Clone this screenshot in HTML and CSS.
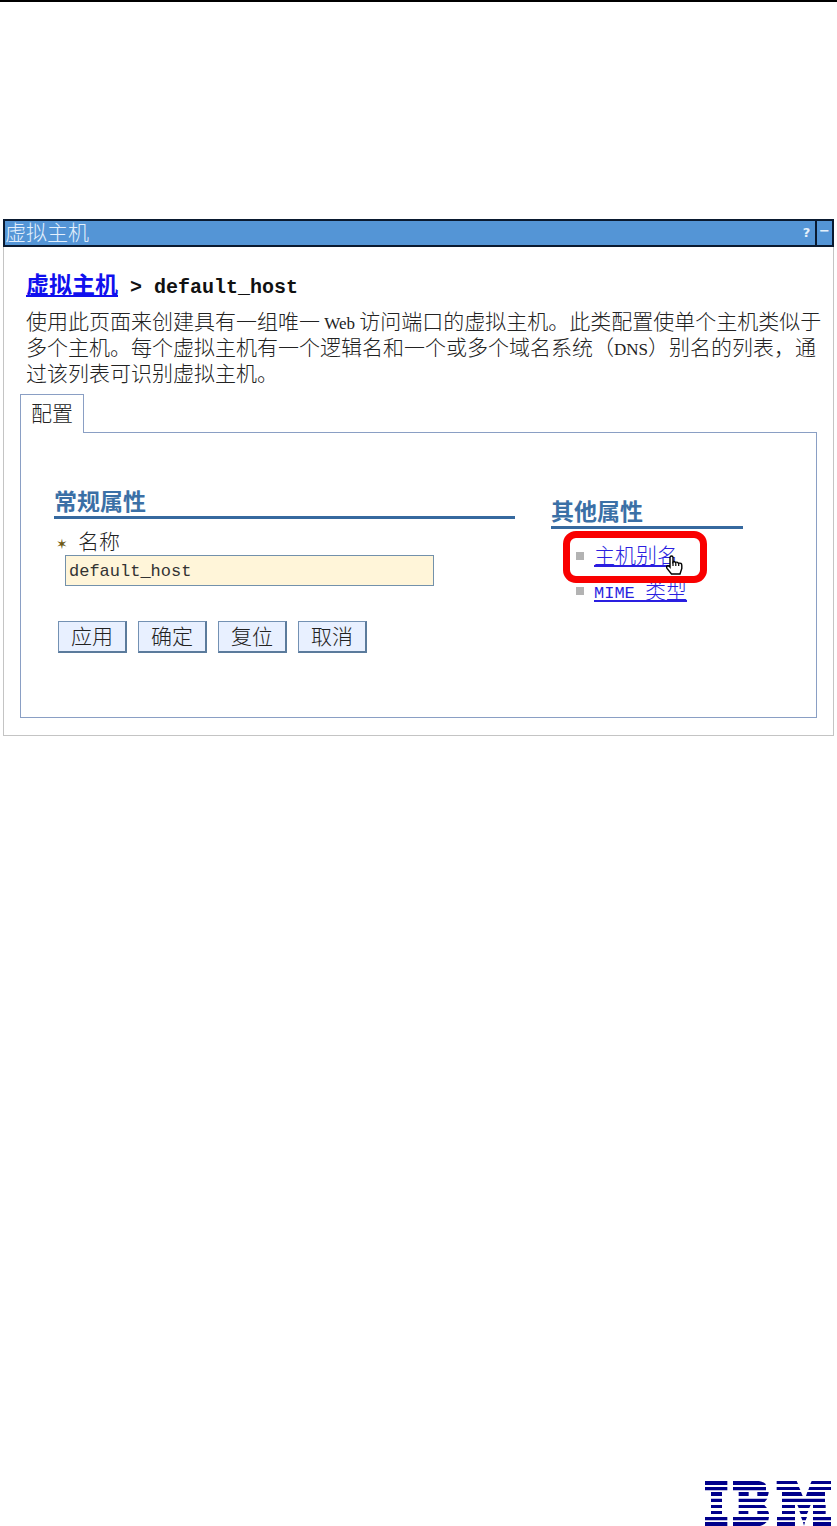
FILE: index.html
```html
<!DOCTYPE html>
<html lang="zh-CN">
<head>
    <meta charset="UTF-8">
    <meta name="viewport" content="width=device-width, initial-scale=1.0">
    <title>虚拟主机</title>
    <link rel="stylesheet" href="styles.css">
</head>
<body>
    <main class="portlet">
        <div class="title-bar">
            <span class="title">虚拟主机</span>
            <button type="button" class="bar-btn help-btn">?</button>
            <button type="button" class="bar-btn min-btn">−</button>
        </div>

        <div class="content">
            <h1 class="breadcrumb"><a href="#">虚拟主机</a><span class="latin"> &gt; default_host</span></h1>
            <p class="description">使用此页面来创建具有一组唯一<span class="latin"> Web </span>访问端口的虚拟主机。此类配置使单个主机类似于<br>多个主机。每个虚拟主机有一个逻辑名和一个或多个域名系统（<span class="latin">DNS</span>）别名的列表，通<br>过该列表可识别虚拟主机。</p>

            <div class="tabs">
                <div class="tab">配置</div>
                <div class="tab-line"></div>
            </div>

            <form class="tab-panel">
                <section class="general">
                    <h2>常规属性</h2>
                    <label for="name"><span class="required">✶</span>名称</label>
                    <input type="text" id="name" name="name" value="default_host">
                    <div class="buttons">
                        <button type="submit">应用</button>
                        <button type="button">确定</button>
                        <button type="reset">复位</button>
                        <button type="button">取消</button>
                    </div>
                </section>

                <section class="other">
                    <h2>其他属性</h2>
                    <ul>
                        <li class="marked">
                            <a href="#">主机别名</a>
                            <span class="marker"></span>
                            <svg class="hand" width="18" height="20" viewBox="0 0 18 20">
                                <path d="M5 12V2.500Q5 1 6.500 1T8 2.500V7Q9 5.800 10.500 7.500Q12 6.500 13.500 8.300Q16.800 7.500 16.800 10.500V13.500L15 19H6.500L2 13.500Q1 11 2.500 10.800Q4 10.800 5 12Z" fill="#fff" stroke="#000" stroke-width="1.400"/>
                                <path d="M8 6.500V11M10.800 8V11M13.700 8.500V11" stroke="#000" stroke-width="1.200" fill="none"/>
                            </svg>
                        </li>
                        <li><a href="#"><span class="latin">MIME </span>类型</a></li>
                    </ul>
                </section>
            </form>
        </div>
    </main>

    <footer class="footer">
        <svg width="126" height="45" viewBox="0 0 378 135" role="img" aria-label="IBM">
            <g fill="#00008b">
                <!-- I -->
                <path d="M0 0h67v12H0zM0 18h67v10H0zM18 33h33v12H18zM18 53h33v10H18zM18 72h33v9H18zM18 90h33v9H18zM0 108h67v10H0zM0 123h67v12H0z"/>
                <!-- B -->
                <path d="M84 0h78q14 3 20 9v3H84zM84 18h99v10H84zM101 33h30v12h-30zM157 33h34q0 7-3 12h-31zM101 53h86l-8 10h-78zM101 72h77l8 9h-85zM101 90h29v9h-29zM157 90h32q3 4 3 9h-35zM84 108h108l-2 10H84zM84 123h101q-8 9-20 12H84z"/>
                <!-- M -->
                <path d="M215 0h60l4 9H215zM320 0h58v9h-62zM215 18h67l4 9h-71zM313 18h65v9h-68zM231 33h57l5 12h-62zM307 33h53v12h-57zM231 53h129v10H231zM231 72h39v9h-39zM277 72h40l-4 9h-32zM324 72h38v9h-38zM231 90h39v9h-39zM283 90h27l-4 9h-19zM324 90h38v9h-38zM216 108h54v10h-54zM288 108h18l-4 10h-10zM324 108h54v10h-54zM216 123h54v12h-54zM294 123h6l-3 11zM324 123h54v12h-54z"/>
            </g>
        </svg>
    </footer>
</body>
</html>
```
FILE: styles.css
```css
* {
    box-sizing: border-box;
}
body {
    margin: 0;
    min-height: 100vh;
    display: flex;
    flex-direction: column;
    border-top: 2px solid #000;
    background: #fff;
    color: #222;
    font-family: "Liberation Serif", "Noto Sans CJK SC", serif;
    font-size: 21px;
    font-weight: 300;
    line-height: 26px;
}
h1, h2, p, ul {
    margin: 0;
    padding: 0;
}
a {
    color: #2a1fe0;
    text-decoration: underline;
    text-decoration-thickness: 2px;
    text-underline-offset: 2px;
}
.latin {
    font-size: 17px;
    line-height: 1;
}
.portlet {
    margin: 217px 3px 0;
    border: 1px solid #c4c4c4;
    border-top: 0;
}
.title-bar {
    display: flex;
    height: 28px;
    margin: 0 -1px;
    border: 2px solid #0a1a30;
    background: #5495d6;
    color: #e4f0fc;
}
.title {
    flex: 1;
    line-height: 24px;
}
.bar-btn {
    width: 17px;
    padding: 0;
    border: 0;
    background: none;
    color: #e4f0fc;
    font-family: "DejaVu Sans", sans-serif;
    font-size: 13px;
    font-weight: bold;
    line-height: 22px;
}
.min-btn {
    padding-bottom: 4px;
    border-left: 2px solid #0a1a30;
    line-height: 16px;
}
.content {
    padding: 26px 16px 17px;
}
.breadcrumb {
    padding-left: 6px;
    margin-bottom: 10px;
    color: #111;
    font-size: 23px;
    font-weight: bold;
}
.breadcrumb a {
    color: #1010ee;
}
.breadcrumb .latin {
    font-family: "Liberation Mono", monospace;
    font-size: 20px;
}
.description {
    padding-left: 6px;
    margin-right: -16px;
}
.tabs {
    display: flex;
    margin-top: 7px;
}
.tab {
    width: 64px;
    height: 39px;
    border: 1px solid #8a9fc4;
    border-bottom: 0;
    line-height: 38px;
    text-align: center;
}
.tab-line {
    flex: 1;
    border-bottom: 1px solid #8a9fc4;
}
.tab-panel {
    display: flex;
    gap: 36px;
    padding: 57px 73px 64px 33px;
    border: 1px solid #8a9fc4;
    border-top: 0;
}
h2 {
    height: 29px;
    border-bottom: 3px solid #36699f;
    color: #3b70a6;
    font-size: 23px;
    font-weight: bold;
}
.general {
    flex: 1;
}
.general label {
    display: block;
    margin-top: 10px;
    padding-left: 2px;
}
.required {
    display: inline-block;
    width: 22px;
    color: #6e5a14;
    font-family: "DejaVu Sans", sans-serif;
    font-size: 14px;
    font-weight: bold;
    line-height: 1;
}
.general input {
    display: block;
    width: 369px;
    height: 31px;
    margin-left: 11px;
    padding: 4px 3px 2px;
    border: 1px solid #7391ab;
    background: #fff5d9;
    color: #333;
    font-family: "Liberation Mono", monospace;
    font-size: 17px;
}
.buttons {
    display: flex;
    gap: 11px;
    margin: 35px 0 0 4px;
}
.buttons button {
    width: 69px;
    height: 32px;
    padding: 0;
    border: 1px solid #7391b3;
    border-right: 2px solid #5b7b9c;
    border-bottom: 2px solid #5b7b9c;
    background: #e8f0ff;
    color: #222;
    font-family: inherit;
    font-size: 21px;
    font-weight: 300;
    line-height: 28px;
}
.other {
    width: 192px;
    padding-top: 10px;
}
.other ul {
    list-style: none;
    padding: 9px 0 0 25px;
}
.other li {
    display: flex;
    align-items: center;
    gap: 10px;
    height: 35px;
}
.other li::before {
    content: "";
    width: 8px;
    height: 8px;
    background: #b3b3b3;
}
.other li .latin {
    font-family: "Liberation Mono", monospace;
}
.marked {
    position: relative;
}
/* red frame around the link to click */
.marker {
    position: absolute;
    left: -13px;
    top: -7px;
    width: 144px;
    height: 52px;
    border: 7px solid #f90000;
    border-radius: 13px;
}
.hand {
    position: absolute;
    left: 89px;
    top: 17px;
}
.footer {
    display: flex;
    justify-content: flex-end;
    margin-top: auto;
    padding-right: 6px;
}
```
